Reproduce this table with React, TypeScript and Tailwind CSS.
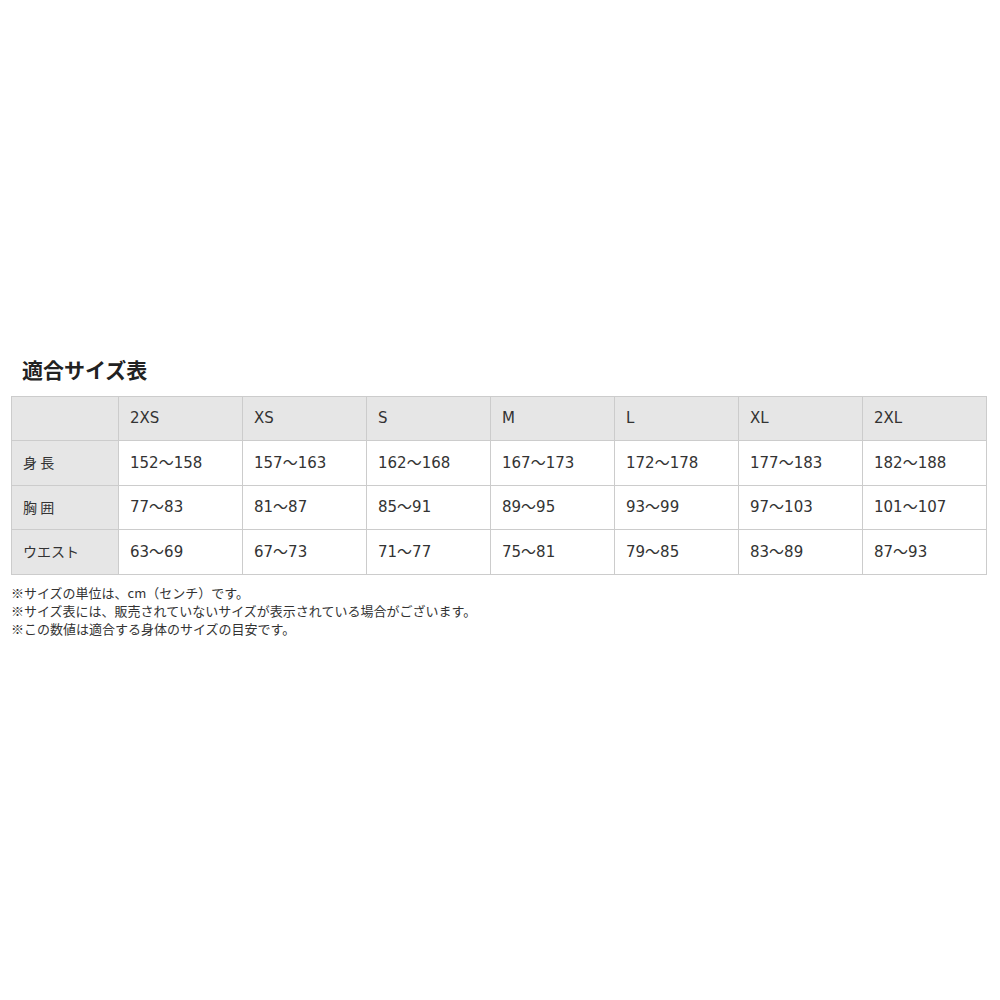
import React from "react";

const sizes = ["2XS", "XS", "S", "M", "L", "XL", "2XL"];
const rows: [string, string[]][] = [
  ["身 長", ["152～158", "157～163", "162～168", "167～173", "172～178", "177～183", "182～188"]],
  ["胸 囲", ["77～83", "81～87", "85～91", "89～95", "93～99", "97～103", "101～107"]],
  ["ウエスト", ["63～69", "67～73", "71～77", "75～81", "79～85", "83～89", "87～93"]],
];

const cjk = "font-['Noto_Sans_CJK_JP',sans-serif]";

export default function App() {
  return (
    <div className="w-[1000px] h-[1000px] bg-white text-[#333] font-['DejaVu_Sans','Noto_Sans_CJK_JP',sans-serif]">
      <div className="pt-[354px] pl-[11px]">
        <h2 className="pl-[11px] text-[21px] font-bold leading-[30px] text-[#222] font-['Noto_Sans_CJK_JP',sans-serif]">
          適合サイズ表
        </h2>
        <table className="mt-[12px] w-[976px] table-fixed border-collapse text-[15px]">
          <colgroup>
            <col className="w-[107px]" />
            {sizes.map((s) => (
              <col key={s} className="w-[124px]" />
            ))}
          </colgroup>
          <tbody>
            <tr className="h-[44px] bg-[#e6e6e6]">
              <td className="border border-[#cccccc]"></td>
              {sizes.map((s) => (
                <td key={s} className="border border-[#cccccc] pl-[11px]">
                  {s}
                </td>
              ))}
            </tr>
            {rows.map(([label, vals]) => (
              <tr key={label} className="h-[44.5px]">
                <td className="border border-[#cccccc] bg-[#e6e6e6] pl-[11px] text-[14px] font-['Noto_Sans_CJK_JP',sans-serif]">
                  {label}
                </td>
                {vals.map((v, i) => (
                  <td key={i} className="border border-[#cccccc] bg-white pl-[11px]">
                    {v}
                  </td>
                ))}
              </tr>
            ))}
          </tbody>
        </table>
        <div className="mt-[9px] text-[13px] leading-[18px] text-[#333] font-['Noto_Sans_CJK_JP',sans-serif]">
          <p>※サイズの単位は、cm（センチ）です。</p>
          <p>※サイズ表には、販売されていないサイズが表示されている場合がございます。</p>
          <p>※この数値は適合する身体のサイズの目安です。</p>
        </div>
      </div>
    </div>
  );
}
